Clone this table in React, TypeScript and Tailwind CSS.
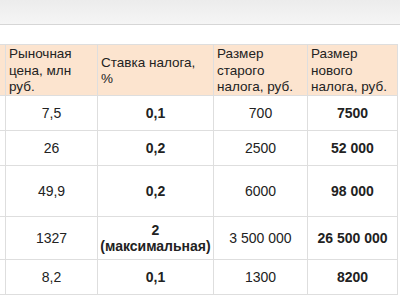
import React from 'react';

const cols = ['w-[6px]', 'w-[92px]', 'w-[116px]', 'w-[94px]', 'w-[90px]'];

const rows = [
  { h: 'h-[35px]', price: '7,5', rate: '0,1', old: '700', next: '7500' },
  { h: 'h-[35px]', price: '26', rate: '0,2', old: '2500', next: '52 000' },
  { h: 'h-[51px]', price: '49,9', rate: '0,2', old: '6000', next: '98 000' },
  { h: 'h-[43px]', price: '1327', rate: '2', note: '(максимальная)', old: '3 500 000', next: '26 500 000' },
  { h: 'h-[35px]', price: '8,2', rate: '0,1', old: '1300', next: '8200' },
];

const cell = 'shrink-0 border-r border-b border-[#dedede] flex items-center';

const App = () => {
  return (
    <div className="w-[400px] h-[300px] bg-white overflow-hidden text-[14px] leading-[16px] text-[#222]" style={{ fontFamily: '"Liberation Sans", Arial, sans-serif' }}>
      <div className="h-[25px] bg-gradient-to-b from-[#ececec] to-[#f5f5f5] border-b border-[#d6d6d6]" />
      <div className="h-[19px]" />
      <div className="w-[398px] border-t border-[#dedede]">
        <div className="flex h-[51px] bg-[#fce4cf] text-[13.5px] leading-[16.5px]">
          <div className={`${cell} ${cols[0]}`} />
          <div className={`${cell} ${cols[1]} pl-[3px] pr-[4px] pt-[2px]`}>Рыночная цена, млн руб.</div>
          <div className={`${cell} ${cols[2]} pl-[3px] pr-[6px] pt-[2px]`}>Ставка налога, %</div>
          <div className={`${cell} ${cols[3]} pl-[3px] pr-[4px] pt-[2px]`}>Размер старого налога, руб.</div>
          <div className={`${cell} ${cols[4]} pl-[3px] pr-[4px] pt-[2px]`}>Размер нового налога, руб.</div>
        </div>
        {rows.map((r, i) => (
          <div key={i} className={`flex ${r.h}`}>
            <div className={`${cell} ${cols[0]}`} />
            <div className={`${cell} ${cols[1]} justify-center`}>{r.price}</div>
            <div className={`${cell} ${cols[2]} flex-col justify-center font-bold text-center`}>
              <span>{r.rate}</span>
              {r.note && <span>{r.note}</span>}
            </div>
            <div className={`${cell} ${cols[3]} justify-center`}>{r.old}</div>
            <div className={`${cell} ${cols[4]} justify-center font-bold`}>{r.next}</div>
          </div>
        ))}
      </div>
    </div>
  );
};

export default App;
